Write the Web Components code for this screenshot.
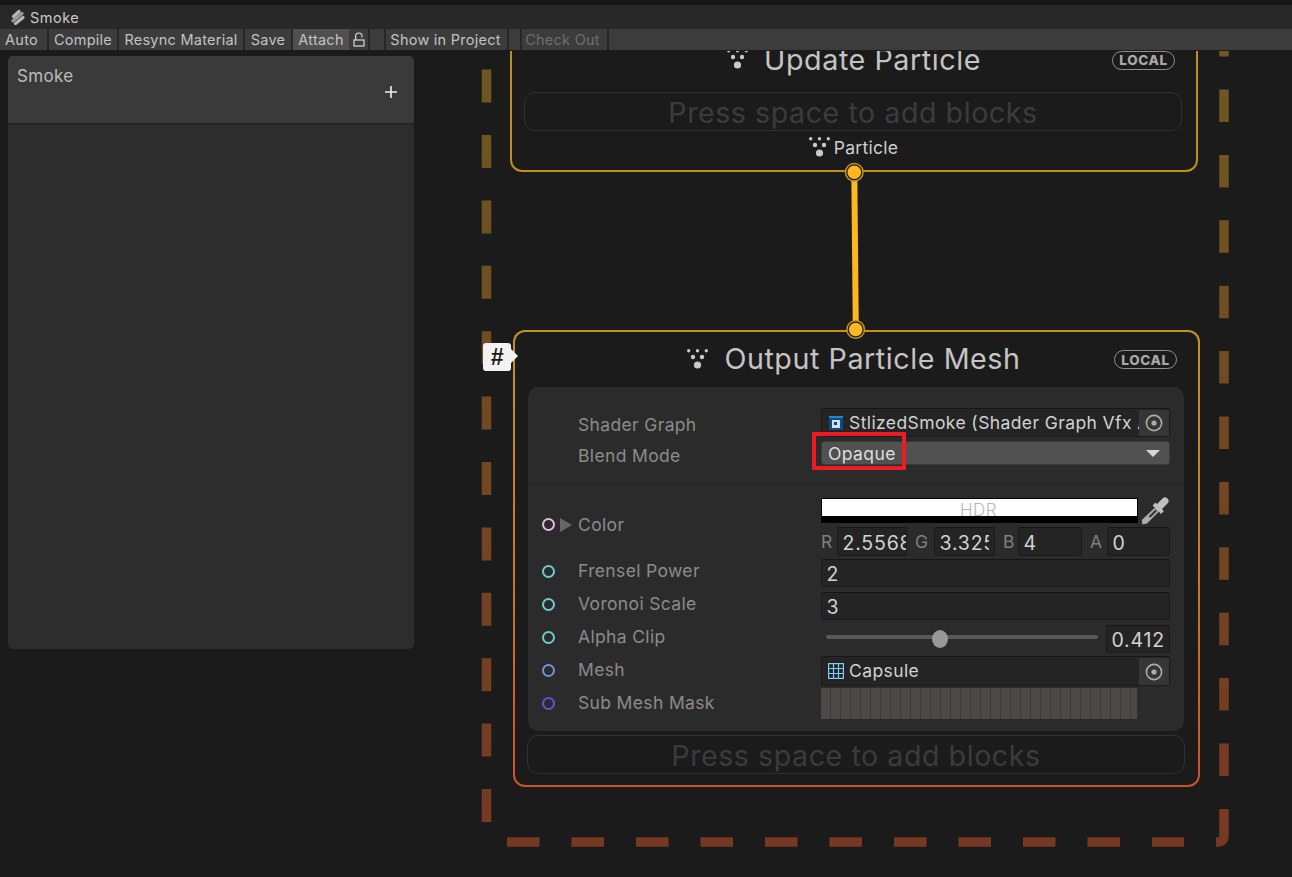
<!DOCTYPE html>
<html>
<head>
<meta charset="utf-8">
<title>Smoke</title>
<style>
    html, body { margin: 0; padding: 0; height: 100%; background: #1b1b1b; overflow: hidden; }
    body { font-family: 'Inter', 'Liberation Sans', sans-serif; }
</style>
</head>
<body>
<vfx-window></vfx-window>
<script>
const PARTICLE_DOTS = `
    <circle cx="1.7" cy="1.7" r="1.7"/><circle cx="10.5" cy="1.7" r="1.7"/><circle cx="19.3" cy="1.7" r="1.7"/>
    <circle cx="6" cy="8" r="2.2"/><circle cx="15" cy="8" r="2.2"/>
    <circle cx="10.5" cy="16" r="3.6"/>`;

class ParticleIcon extends HTMLElement {
    constructor() {
        super();
        this.root = this.attachShadow({ mode: 'open' });
    }
    connectedCallback() {
        this.root.innerHTML = `
      <style>
        :host { display: inline-flex; width: 21px; height: 20px; flex: none; }
        svg { width: 100%; height: 100%; fill: #c9c9c9; display: block; }
      </style>
      <svg viewBox="0 0 21 20">${PARTICLE_DOTS}</svg>`;
    }
}
customElements.define('particle-icon', ParticleIcon);

class ToolButton extends HTMLElement {
    constructor() {
        super();
        this.root = this.attachShadow({ mode: 'open' });
    }
    connectedCallback() {
        this.root.innerHTML = `
      <style>
        :host {
            display: flex; align-items: center; justify-content: center; box-sizing: border-box;
            height: 21px; background: #3c3c3c; color: #c2c2c2; flex: none;
            font-size: 14.5px; letter-spacing: 0.25px; white-space: nowrap;
        }
        :host([active]) { background: #505050; }
        :host([disabled]) { color: #6e6e6e; }
      </style>
      <slot></slot>`;
    }
}
customElements.define('tool-button', ToolButton);

class VfxToolbar extends HTMLElement {
    constructor() {
        super();
        this.root = this.attachShadow({ mode: 'open' });
    }
    connectedCallback() {
        this.root.innerHTML = `
      <style>
        :host { display: flex; gap: 2px; background: #272727; height: 21px; flex: none; }
        .lock { width: 19px; margin-left: -2px; }
        .fill { flex: 1; }
        svg { width: 12px; height: 15px; fill: none; stroke: #d8d8d8; stroke-width: 1.2; }
      </style>
      <tool-button style="width:47px;padding-right:4px">Auto</tool-button>
      <tool-button style="width:68px">Compile</tool-button>
      <tool-button style="width:124px">Resync Material</tool-button>
      <tool-button style="width:46px">Save</tool-button>
      <tool-button active style="width:56px">Attach</tool-button>
      <tool-button class="lock">
        <svg viewBox="0 0 12 15"><rect x="1" y="8" width="10" height="6"/><path d="M2.600 8V4.200a3.200 3.200 0 0 1 6.400 0V5.500"/></svg>
      </tool-button>
      <tool-button style="width:14px"></tool-button>
      <tool-button style="width:121px;padding-right:2px">Show in Project</tool-button>
      <tool-button style="width:11px"></tool-button>
      <tool-button disabled style="width:85px;padding-right:4px">Check Out</tool-button>
      <tool-button class="fill"></tool-button>`;
    }
}
customElements.define('vfx-toolbar', VfxToolbar);

class VfxTitlebar extends HTMLElement {
    constructor() {
        super();
        this.root = this.attachShadow({ mode: 'open' });
    }
    connectedCallback() {
        this.root.innerHTML = `
      <style>
        :host {
            display: flex; align-items: center; gap: 5px; flex: none;
            height: 24px; margin-top: 5px; padding-left: 11px;
            background: #282828; color: #c8c8c8; font-size: 14.5px; letter-spacing: 0.5px;
        }
        svg { width: 14px; height: 17px; display: block; fill: none; stroke-linecap: round; stroke-width: 3.200; }
      </style>
      <svg viewBox="0 0 14 17">
        <path d="M2.500 7.500L8 2.500" stroke="#b8b8b8"/>
        <path d="M2 11.800L11 4.500" stroke="#9a9a9a"/>
        <path d="M4.500 14.500L12 8.500" stroke="#b8b8b8"/>
      </svg>
      <span><slot></slot></span>`;
    }
}
customElements.define('vfx-titlebar', VfxTitlebar);

class VfxBlackboard extends HTMLElement {
    constructor() {
        super();
        this.root = this.attachShadow({ mode: 'open' });
    }
    connectedCallback() {
        this.root.innerHTML = `
      <style>
        :host {
            display: flex; flex-direction: column; width: 406px; height: 593px;
            margin: 5px 0 0 8px; background: #2d2d2d; border-radius: 5px; overflow: hidden;
        }
        .head {
            height: 69px; flex: none; box-sizing: border-box; padding: 10px 9px;
            background: #3a3a3a; border-bottom: 2px solid #252525; position: relative;
            color: #bcbcbc; font-size: 17px; letter-spacing: 0.3px;
        }
        .add { display: flex; justify-content: flex-end; padding: 0 8px 0 0; }
        svg { width: 12px; height: 12px; stroke: #f0f0f0; stroke-width: 1.6; display: block; }
      </style>
      <div class="head">
        <div><slot></slot></div>
        <div class="add"><svg viewBox="0 0 12 12"><path d="M6 0V12M0 6H12"/></svg></div>
      </div>`;
    }
}
customElements.define('vfx-blackboard', VfxBlackboard);

class LocalBadge extends HTMLElement {
    constructor() {
        super();
        this.root = this.attachShadow({ mode: 'open' });
    }
    connectedCallback() {
        this.root.innerHTML = `
      <style>
        :host {
            display: flex; align-items: center; justify-content: center; box-sizing: border-box;
            width: 63px; height: 19px; border: 1.5px solid #8e8e8e; border-radius: 10px;
            color: #a8a8a8; font-size: 13.5px; font-weight: 800; letter-spacing: 0.6px; flex: none;
        }
      </style>
      LOCAL`;
    }
}
customElements.define('local-badge', LocalBadge);

class PressBlock extends HTMLElement {
    constructor() {
        super();
        this.root = this.attachShadow({ mode: 'open' });
    }
    connectedCallback() {
        this.root.innerHTML = `
      <style>
        :host {
            display: flex; align-items: center; justify-content: center; box-sizing: border-box;
            height: 39px; width: 658px; flex: none; border: 1px solid #303030; border-radius: 11px; padding-top: 2px;
            color: #3b3b3b; font-size: 28.6px; letter-spacing: 0.55px; white-space: nowrap;
        }
      </style>
      Press space to add blocks`;
    }
}
customElements.define('press-block', PressBlock);

class NodeTitle extends HTMLElement {
    constructor() {
        super();
        this.root = this.attachShadow({ mode: 'open' });
    }
    connectedCallback() {
        this.root.innerHTML = `
      <style>
        :host { display: grid; grid-template-columns: 1fr auto 1fr; align-items: center; flex: none; color: #c4c4c4; }
        .name {
            display: flex; align-items: center; gap: 16px; font-size: 28.7px; letter-spacing: 0.55px;
            white-space: nowrap; grid-column: 2; margin-right: var(--title-shift, 0px); margin-top: var(--title-top, 0px);
        }
        local-badge { justify-self: end; margin-right: 21px; }
      </style>
      <div class="name"><particle-icon></particle-icon><span><slot></slot></span></div>
      <local-badge></local-badge>`;
    }
}
customElements.define('node-title', NodeTitle);

class PortDot extends HTMLElement {
    constructor() {
        super();
        this.root = this.attachShadow({ mode: 'open' });
    }
    connectedCallback() {
        const color = this.getAttribute('color') || '#888';
        this.root.innerHTML = `
      <style>
        :host { display: block; box-sizing: border-box; width: 13px; height: 13px; flex: none; border-radius: 50%; border: 2px solid ${color}; }
      </style>`;
    }
}
customElements.define('port-dot', PortDot);

class NodeRow extends HTMLElement {
    constructor() {
        super();
        this.root = this.attachShadow({ mode: 'open' });
    }
    connectedCallback() {
        const color = this.getAttribute('port');
        const port = color ? `<port-dot color="${color}"></port-dot>` : '';
        const expand = this.hasAttribute('expand') ? '<span class="tri"></span>' : '';
        this.root.innerHTML = `
      <style>
        :host { display: flex; align-items: flex-start; height: var(--row-h, 33px); flex: none; padding-right: 14px; }
        .head {
            display: flex; align-items: center; width: 293px; height: 33px; flex: none;
            box-sizing: border-box; padding-left: 13.5px; margin-top: var(--label-top, 0px); position: relative;
        }
        .tri {
            position: absolute; left: 32px; top: 10px; width: 0; height: 0;
            border-left: 12px solid #666; border-top: 7px solid transparent; border-bottom: 7px solid transparent;
        }
        .label {
            position: absolute; left: 50px; top: var(--label-y, 5px); color: #8b8b8b; font-size: 17.5px; letter-spacing: 0.35px; white-space: nowrap;
        }
        .field { flex: 1; min-width: 0; }
      </style>
      <div class="head">${port}${expand}<span class="label">${this.getAttribute('label')}</span></div>
      <div class="field"><slot></slot></div>`;
    }
}
customElements.define('node-row', NodeRow);

class NumField extends HTMLElement {
    constructor() {
        super();
        this.root = this.attachShadow({ mode: 'open' });
    }
    connectedCallback() {
        this.root.innerHTML = `
      <style>
        :host {
            display: flex; align-items: center; box-sizing: border-box; height: 28px;
            padding: 2px var(--pr, 0px) 0 4.5px;
            background: #242424; border: 1px solid #1c1c1c; border-top-color: #151515; border-radius: 3px;
            color: #d2d2d2; font-size: 19.5px; letter-spacing: 0.8px; margin-top: var(--top, 4px); width: var(--w, auto); flex: none;
        }
        div { overflow: hidden; white-space: nowrap; width: 100%; }
      </style>
      <div><slot></slot></div>`;
    }
}
customElements.define('num-field', NumField);

class ObjectField extends HTMLElement {
    constructor() {
        super();
        this.root = this.attachShadow({ mode: 'open' });
    }
    connectedCallback() {
        this.root.innerHTML = `
      <style>
        :host {
            display: flex; align-items: center; box-sizing: border-box; height: var(--h, 29px); padding-left: 6px;
            background: #242424; border: 1px solid #1c1c1c; border-top-color: #171717; border-radius: 3px;
            color: #d2d2d2; font-size: 17.5px; letter-spacing: 0.4px; margin-top: var(--top, 0px);
        }
        .icon { display: flex; flex: none; width: 16px; margin-right: 5px; }
        .text { flex: 1; overflow: hidden; white-space: nowrap; min-width: 0; padding-bottom: var(--text-pb, 0px); }
        .pick {
            width: 30px; align-self: stretch; margin-top: 1px; flex: none; background: #363636;
            display: flex; align-items: center; justify-content: center;
        }
        .pick svg { width: 18px; height: 18px; display: block; fill: none; stroke: #ababab; stroke-width: 1.6; }
      </style>
      <span class="icon"><slot name="icon"></slot></span>
      <span class="text"><slot></slot></span>
      <span class="pick"><svg viewBox="0 0 18 18"><circle cx="9" cy="9" r="7.6"/><circle cx="9" cy="9" r="2.6" fill="#ababab" stroke="none"/></svg></span>`;
    }
}
customElements.define('object-field', ObjectField);

class EnumField extends HTMLElement {
    constructor() {
        super();
        this.root = this.attachShadow({ mode: 'open' });
    }
    connectedCallback() {
        this.root.innerHTML = `
      <style>
        :host {
            display: flex; align-items: center; justify-content: space-between; box-sizing: border-box;
            height: 24px; padding: 0 9px 0 6px; background: #515151; border: 1px solid #3a3a3a; border-radius: 3px;
            color: #dedede; font-size: 17.5px; letter-spacing: 0.4px;
        }
        i { width: 0; height: 0; border-top: 7px solid #d8d8d8; border-left: 7px solid transparent; border-right: 7px solid transparent; }
      </style>
      <span><slot></slot></span><i></i>`;
    }
}
customElements.define('enum-field', EnumField);

class ColorField extends HTMLElement {
    constructor() {
        super();
        this.root = this.attachShadow({ mode: 'open' });
    }
    connectedCallback() {
        this.root.innerHTML = `
      <style>
        :host { display: block; }
        .top { display: flex; align-items: flex-start; height: 29px; }
        .swatch {
            width: 317px; height: 25px; box-sizing: border-box; background: #000; padding: 1px 1px 0; position: relative; flex: none;
        }
        .white { height: 17px; background: #fff; }
        .hdr {
            position: absolute; left: 0; right: 0; top: 2px; text-align: center;
            color: #b8b8b8; font-size: 17px; font-weight: 300; letter-spacing: 0.4px; padding-right: 2px;
        }
        .drop { width: 28px; height: 28px; margin: -1px 0 0 3px; display: block; flex: none; }
        .rgba { display: flex; align-items: center; height: 29px; --top: 0px; }
        .rgba span { color: #7f7f7f; font-size: 17.5px; flex: none; }
        .rgba num-field { height: 29px; }
        .next { margin-left: 8px; }
      </style>
      <div class="top">
        <div class="swatch"><div class="white"></div><div class="hdr">HDR</div></div>
        <svg class="drop" viewBox="0 0 28 28">
          <path d="M18.500 9.500L24 4" stroke="#c0c0c0" stroke-width="7" stroke-linecap="round" fill="none"/>
          <path d="M13 7L21.500 15.500" stroke="#c0c0c0" stroke-width="4" fill="none"/>
          <path d="M14 10.500L18 14.500L6 26.500L1.500 27.500L0.800 23z" fill="#adadad"/>
          <path d="M14.500 12.500L16 14L9.500 20.500L7.500 19.500z" fill="#333"/>
        </svg>
      </div>
      <div class="rgba">
        <span style="width:16px">R</span><num-field style="--w:70px">2.5568</num-field>
        <span class="next" style="width:19px">G</span><num-field style="--w:61px;--pr:5px">3.325</num-field>
        <span class="next" style="width:15px">B</span><num-field style="--w:64px">4</num-field>
        <span class="next" style="width:17px">A</span><num-field style="--w:63px">0</num-field>
      </div>`;
    }
}
customElements.define('color-field', ColorField);

class SliderField extends HTMLElement {
    constructor() {
        super();
        this.root = this.attachShadow({ mode: 'open' });
    }
    connectedCallback() {
        this.root.innerHTML = `
      <style>
        :host { display: flex; align-items: flex-start; padding-left: 5px; }
        .track { position: relative; width: 272px; height: 4px; margin-top: 14px; background: #585858; border-radius: 2px; flex: none; }
        .thumb { position: absolute; left: 106px; top: -5px; width: 16px; height: 18px; border-radius: 50%; background: #999; }
        num-field { --w: 64px; margin-left: 8px; }
      </style>
      <div class="track"><div class="thumb"></div></div>
      <num-field><slot></slot></num-field>`;
    }
}
customElements.define('slider-field', SliderField);

class VfxUpdateNode extends HTMLElement {
    constructor() {
        super();
        this.root = this.attachShadow({ mode: 'open' });
    }
    connectedCallback() {
        this.root.innerHTML = `
      <style>
        :host {
            position: absolute; left: 510px; top: -21px; width: 688px; box-sizing: border-box;
            display: flex; flex-direction: column; border: 2px solid #bd8f1f; border-radius: 12px; background: #1b1b1b;
        }
        node-title { height: 56px; --title-top: -2px; }
        press-block { margin: 4px 0 0 12px; }
        .out {
            display: flex; align-items: center; justify-content: center; gap: 4px; height: 32px; margin-bottom: 7px;
            padding-right: 1px; color: #cfcfcf; font-size: 17.5px; letter-spacing: 0.3px;
        }
      </style>
      <node-title>Update Particle</node-title>
      <press-block></press-block>
      <div class="out"><particle-icon></particle-icon>Particle</div>`;
    }
}
customElements.define('vfx-update-node', VfxUpdateNode);

class VfxOutputNode extends HTMLElement {
    constructor() {
        super();
        this.root = this.attachShadow({ mode: 'open' });
    }
    connectedCallback() {
        this.root.innerHTML = `
      <style>
        :host {
            position: absolute; left: 513px; top: 279px; width: 687px; height: 457px; box-sizing: border-box;
            display: flex; flex-direction: column; border: 2px solid transparent; border-radius: 12px;
            background: linear-gradient(#1b1b1b, #1b1b1b) padding-box, linear-gradient(#c2941f 0%, #c8772a 55%, #c9532b 100%) border-box;
        }
        node-title { height: 55px; --title-shift: 5px; --title-top: -2px; }
        .panel { width: 656px; margin-left: 13px; background: #2b2b2b; border-radius: 10px; flex: none; }
        .sec1 { padding: 21px 0 19px; display: flex; flex-direction: column; gap: 4px; border-bottom: 1px solid #242424; }
        .sec2 { padding: 13px 0 11px; }
        press-block { margin: 4px 0 0 12px; }
        .sm { display: block; width: 16px; height: 16px; }
        .mask {
            height: 31px; width: 316px; margin-top: 1px;
            background: repeating-linear-gradient(90deg, #4b4845 0 9px, #3d3b39 9px 10px);
        }
      </style>
      <node-title>Output Particle Mesh</node-title>
      <div class="panel">
        <div class="sec1">
          <node-row label="Shader Graph" style="--row-h:29px;--label-top:0.5px">
            <object-field>
              <svg slot="icon" class="sm" viewBox="0 0 16 16">
                <rect x="1" y="1" width="14" height="14" fill="#0d4a80"/>
                <rect x="1" y="1" width="14" height="2" fill="#2b82c9"/>
                <rect x="4" y="5" width="8" height="8" fill="#cfe0ee"/>
                <rect x="6" y="7" width="3" height="3" fill="#0d4a80"/>
              </svg>
              StlizedSmoke (Shader Graph Vfx A
            </object-field>
          </node-row>
          <node-row label="Blend Mode" style="--row-h:24px;--label-top:-1.5px">
            <enum-field>Opaque</enum-field>
          </node-row>
        </div>
        <div class="sec2">
          <node-row label="Color" port="#e6b9e6" expand style="--row-h:57px;--label-top:10px;--label-y:6px">
            <color-field></color-field>
          </node-row>
          <node-row label="Frensel Power" port="#6fcccc"><num-field>2</num-field></node-row>
          <node-row label="Voronoi Scale" port="#6fcccc"><num-field>3</num-field></node-row>
          <node-row label="Alpha Clip" port="#6fcccc"><slider-field>0.412</slider-field></node-row>
          <node-row label="Mesh" port="#6d96d8">
            <object-field style="--h:30px;--top:2px;--text-pb:2px">
              <svg slot="icon" class="sm" viewBox="0 0 16 16" fill="none" stroke="#7fcdf6" stroke-width="1.2">
                <rect x="0.6" y="0.6" width="14.800" height="14.800"/><path d="M5.500 0.600V15.400M10.500 0.600V15.400M0.600 5.500H15.400M0.600 10.500H15.400"/>
              </svg>
              Capsule
            </object-field>
          </node-row>
          <node-row label="Sub Mesh Mask" port="#6b50d8"><div class="mask"></div></node-row>
        </div>
      </div>
      <press-block></press-block>`;
    }
}
customElements.define('vfx-output-node', VfxOutputNode);

class GroupFrame extends HTMLElement {
    constructor() {
        super();
        this.root = this.attachShadow({ mode: 'open' });
    }
    connectedCallback() {
        this.root.innerHTML = `
      <style>
        :host { position: absolute; inset: 0; display: block; }
        svg { width: 100%; height: 100%; display: block; fill: none; }
      </style>
      <svg viewBox="0 51 1292 826">
        <defs>
          <linearGradient id="dash" gradientUnits="userSpaceOnUse" x1="0" y1="50" x2="0" y2="850">
            <stop offset="0" stop-color="#6d5820"/><stop offset="1" stop-color="#763823"/>
          </linearGradient>
        </defs>
        <g stroke="url(#dash)" stroke-width="9.500">
          <path d="M486.500 822V50" stroke-dasharray="33 32.400"/>
          <path d="M1224 776V50" stroke-dasharray="32.500 32.900"/>
          <path d="M507 842H1184" stroke-dasharray="32.500 32"/>
          <path d="M1224 809V836Q1224 842 1218 842H1216"/>
        </g>
      </svg>`;
    }
}
customElements.define('group-frame', GroupFrame);

class FlowWire extends HTMLElement {
    constructor() {
        super();
        this.root = this.attachShadow({ mode: 'open' });
    }
    connectedCallback() {
        this.root.innerHTML = `
      <style>
        :host { position: absolute; inset: 0; display: block; pointer-events: none; }
        svg { width: 100%; height: 100%; display: block; }
      </style>
      <svg viewBox="0 51 1292 826">
        <path d="M854.300 172L855.800 330" stroke="#fcb81f" stroke-width="6" fill="none"/>
        <g fill="#1b1b1b" stroke="#c2941f" stroke-width="1.500">
          <circle cx="854.300" cy="172.300" r="8.800"/><circle cx="855.700" cy="329.500" r="8.800"/>
        </g>
        <g fill="#fdb81f">
          <circle cx="854.300" cy="172.300" r="6.800"/><circle cx="855.700" cy="329.500" r="6.800"/>
        </g>
      </svg>`;
    }
}
customElements.define('flow-wire', FlowWire);

class StickyBadge extends HTMLElement {
    constructor() {
        super();
        this.root = this.attachShadow({ mode: 'open' });
    }
    connectedCallback() {
        this.root.innerHTML = `
      <style>
        :host {
            position: absolute; left: 483px; top: 292px; width: 28px; height: 28px; display: flex;
            align-items: center; justify-content: center; background: #f2f2f2; border-radius: 3px;
            color: #1b1b1b; font-size: 23px; font-weight: 800; font-family: 'Liberation Sans', sans-serif; font-style: italic;
        }
        i { position: absolute; left: 28px; top: 6px; width: 0; height: 0; border-left: 7px solid #f2f2f2; border-top: 7px solid transparent; border-bottom: 7px solid transparent; }
      </style>
      #<i></i>`;
    }
}
customElements.define('sticky-badge', StickyBadge);

class RedMark extends HTMLElement {
    constructor() {
        super();
        this.root = this.attachShadow({ mode: 'open' });
    }
    connectedCallback() {
        this.root.innerHTML = `
      <style>
        :host {
            position: absolute; left: 812px; top: 381px; width: 94px; height: 38px; box-sizing: border-box;
            border: 4px solid #ec1c24; display: block;
        }
      </style>`;
    }
}
customElements.define('red-mark', RedMark);

class VfxCanvas extends HTMLElement {
    constructor() {
        super();
        this.root = this.attachShadow({ mode: 'open' });
    }
    connectedCallback() {
        this.root.innerHTML = `
      <style>
        :host { display: block; flex: 1; position: relative; overflow: hidden; background: #1b1b1b; }
      </style>
      <vfx-blackboard>Smoke</vfx-blackboard>
      <group-frame></group-frame>
      <vfx-update-node></vfx-update-node>
      <vfx-output-node></vfx-output-node>
      <flow-wire></flow-wire>
      <sticky-badge></sticky-badge>
      <red-mark></red-mark>`;
    }
}
customElements.define('vfx-canvas', VfxCanvas);

class VfxWindow extends HTMLElement {
    constructor() {
        super();
        this.root = this.attachShadow({ mode: 'open' });
    }
    connectedCallback() {
        this.root.innerHTML = `
      <style>
        :host {
            display: flex; flex-direction: column; height: 877px; background: #171717;
            font-family: 'Inter', 'Liberation Sans', sans-serif;
        }
        .line { height: 1px; background: #1b1b1b; flex: none; }
      </style>
      <vfx-titlebar>Smoke</vfx-titlebar>
      <vfx-toolbar></vfx-toolbar>
      <div class="line"></div>
      <vfx-canvas></vfx-canvas>`;
    }
}
customElements.define('vfx-window', VfxWindow);
</script>
</body>
</html>
